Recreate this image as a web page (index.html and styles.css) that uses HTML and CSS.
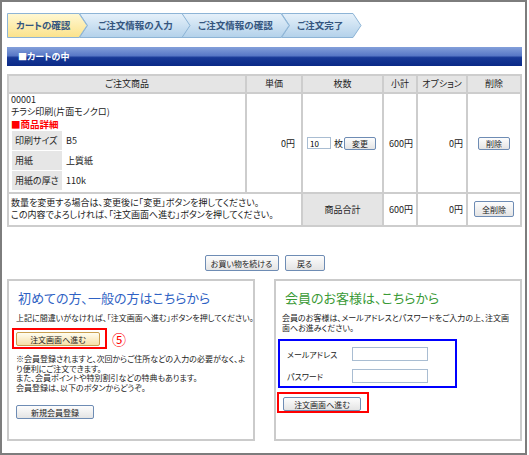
FILE: index.html
```html
<!DOCTYPE html>
<html>
<head>
<meta charset="utf-8">
<title>カートの中</title>
<link rel="stylesheet" href="styles.css">
</head>
<body>
<div class="frame">
	<svg class="steps" width="356" height="25" viewBox="0 0 356 25">
		<defs>
			<linearGradient id="step-on" x1="0" y1="0" x2="0" y2="1">
				<stop offset="0" stop-color="#fff8d4"/>
				<stop offset="1" stop-color="#fbe28a"/>
			</linearGradient>
			<linearGradient id="step-off" x1="0" y1="0" x2="0" y2="1">
				<stop offset="0" stop-color="#e6f1fa"/>
				<stop offset="1" stop-color="#b3d1ea"/>
			</linearGradient>
		</defs>
		<polygon class="step-shape" points="274.5,0.5 346,0.5 354,12.5 346,24.5 274.5,24.5 282.5,12.5" fill="url(#step-off)"/>
		<polygon class="step-shape" points="174.5,0.5 274,0.5 282,12.5 274,24.5 174.5,24.5 182.5,12.5" fill="url(#step-off)"/>
		<polygon class="step-shape" points="72.5,0.5 175,0.5 183,12.5 175,24.5 72.5,24.5 80.5,12.5" fill="url(#step-off)"/>
		<polygon class="step-shape" points="0.5,0.5 72,0.5 80,12.5 72,24.5 0.5,24.5" fill="url(#step-on)"/>
		<text class="step-text" x="9" y="16">カートの確認</text>
		<text class="step-text" x="91" y="16">ご注文情報の入力</text>
		<text class="step-text" x="191" y="16">ご注文情報の確認</text>
		<text class="step-text" x="290" y="16">ご注文完了</text>
	</svg>

	<div class="cart-title">■カートの中</div>

	<table class="cart">
		<colgroup>
			<col style="width:238px">
			<col style="width:56px">
			<col style="width:81px">
			<col style="width:34px">
			<col style="width:50px">
			<col style="width:54px">
		</colgroup>
		<tr>
			<th>ご注文商品</th>
			<th>単価</th>
			<th>枚数</th>
			<th>小計</th>
			<th>オプション</th>
			<th>削除</th>
		</tr>
		<tr class="item">
			<td class="product">
				<p>00001</p>
				<p>チラシ印刷(片面モノクロ)</p>
				<p class="detail">■商品詳細</p>
				<dl class="spec">
					<dt>印刷サイズ</dt><dd>B5</dd>
					<dt>用紙</dt><dd>上質紙</dd>
					<dt>用紙の厚さ</dt><dd>110k</dd>
				</dl>
			</td>
			<td class="price">0円</td>
			<td>
				<div class="qty">
					<input class="qty-input" type="text" value="10">
					<span class="qty-unit">枚</span>
					<button class="btn btn-small">変更</button>
				</div>
			</td>
			<td class="sub">600円</td>
			<td class="opt">0円</td>
			<td class="center"><button class="btn btn-small">削除</button></td>
		</tr>
		<tr class="total">
			<td colspan="2" class="note">数量を変更する場合は、変更後に「変更」ボタンを押してください。<br>この内容でよろしければ、「注文画面へ進む」ボタンを押してください。</td>
			<td class="total-label">商品合計</td>
			<td class="sub">600円</td>
			<td class="opt">0円</td>
			<td class="center"><button class="btn btn-all">全削除</button></td>
		</tr>
	</table>

	<div class="nav-buttons">
		<button class="btn btn-continue">お買い物を続ける</button>
		<button class="btn btn-back">戻る</button>
	</div>

	<div class="entry">
		<div class="box guest">
			<h2 class="box-title">初めての方、一般の方はこちらから</h2>
			<p class="box-text">上記に間違いがなければ、「注文画面へ進む」ボタンを押してください。</p>
			<div class="order-row">
				<div class="mark-red"><button class="btn btn-order">注文画面へ進む</button></div>
				<span class="step-no">⑤</span>
			</div>
			<p class="guest-note">※会員登録されますと、次回からご住所などの入力の必要がなく、よ<br>り便利にご注文できます。<br>また、会員ポイントや特別割引などの特典もあります。<br>会員登録は、以下のボタンからどうぞ。</p>
			<button class="btn btn-register">新規会員登録</button>
		</div>
		<div class="box member">
			<h2 class="box-title">会員のお客様は、こちらから</h2>
			<p class="box-text">会員のお客様は、メールアドレスとパスワードをご入力の上、注文画<br>面へお進みください。</p>
			<div class="login">
				<label>メールアドレス</label><input class="login-input" type="text">
				<label>パスワード</label><input class="login-input" type="password">
			</div>
			<div class="mark-red mark-member"><button class="btn btn-login">注文画面へ進む</button></div>
		</div>
	</div>
</div>
</body>
</html>
```

FILE: styles.css
```css
*{margin: 0; padding: 0; box-sizing: border-box;}
body{font-family: "Noto Sans CJK JP", "Noto Sans", sans-serif; font-size: 9px; color: #222; font-feature-settings: "palt";}
.frame{width: 527px; height: 455px; border: 2px solid #7d7d7d; padding: 11px 3px 0 5px; overflow: hidden;}

.steps{display: block;}
.step-shape{stroke: #8db4d6; stroke-width: 1;}
.step-text{font-family: "Noto Sans CJK JP", sans-serif; font-size: 9.5px; font-weight: bold; fill: #35567f; font-feature-settings: "palt";}

.cart-title{margin-top: 9px; height: 19px; line-height: 19px; padding-left: 11px; color: #fff; font-weight: bold; font-size: 9px; background: linear-gradient(#839fda, #5878c6 45%, #173896 56%, #0a2987);}

.cart{margin-top: 8px; width: 515px; table-layout: fixed; border-collapse: separate; border-spacing: 0; border-top: 2px solid #cdcdcd; border-left: 2px solid #cdcdcd;}
.cart th, .cart td{border-right: 2px solid #cdcdcd; border-bottom: 2px solid #cdcdcd; padding: 0 2px; vertical-align: middle;}
.cart th{background: #e5e5e5; font-weight: normal; line-height: 16px;}
.product{line-height: 12px; padding: 0 2px 2px !important;}
.detail{color: #f00; font-weight: bold; font-size: 9.5px; line-height: 13px;}
.spec{display: grid; grid-template-columns: 50px 1fr; row-gap: 1px; margin-left: 1px;}
.spec dt{background: #e6e6e6; line-height: 19px; padding-left: 3px;}
.spec dd{line-height: 19px; padding-left: 4px;}
.price{text-align: right; padding-right: 6px !important;}
.sub{text-align: right; padding-right: 3px !important;}
.opt{text-align: right; padding-right: 3px !important;}
.center{text-align: center;}
.qty{display: flex; align-items: center; padding-left: 2px;}
.qty-input{width: 24px; height: 12px; border: 1px solid #a9bdd2; font-size: 8px; padding-left: 2px; font-family: inherit;}
.qty-unit{margin: 0 1px 0 3px;}
.total td{padding-top: 3px; padding-bottom: 4px;}
.note{line-height: 12px;}
.total-label{background: #e5e5e5; text-align: center;}

.btn{font-family: inherit; font-size: 8px; color: #222; border: 1px solid #6e8cb4; border-radius: 2px; background: linear-gradient(#fdfdfd, #e4e4e4); font-feature-settings: "palt";}
.btn-small{width: 32px; height: 13px;}
.btn-all{width: 40px; height: 16px;}

.nav-buttons{display: flex; justify-content: center; gap: 6px; margin-top: 28px;}
.btn-continue{width: 74px; height: 16px;}
.btn-back{width: 40px; height: 16px;}

.entry{display: flex; justify-content: space-between; margin-top: 8px;}
.box{width: 248px; height: 162px; border: 2px solid #cbcbcb; padding: 9px 7px 0;}
.member{padding-left: 6px;}
.box-title{font-size: 13px; line-height: 16px; font-weight: normal; padding-left: 2px;}
.guest .box-title{color: #2f62c4;}
.member .box-title{color: #3a9a36; padding-left: 3px;}
.box-text{font-size: 8px; line-height: 10px; margin-top: 7px; white-space: nowrap;}

.mark-red{display: inline-block; border: 2px solid #f00; padding: 2px 5px 1px 2px;}
.order-row{display: flex; align-items: center; margin: 5px 0 0 -4px;}
.step-no{color: #f00; font-size: 14px; line-height: 16px; margin-left: 5px;}
.btn-order{display: block; width: 84px; height: 14px; border-color: #c9a050; background: linear-gradient(#fffdf0, #f6e0a8);}
.guest-note{font-size: 8px; line-height: 9.5px; margin-top: 5px; white-space: nowrap;}
.btn-register{display: block; width: 78px; height: 14px; margin-top: 13px;}

.login{display: grid; grid-template-columns: 65px 76px; row-gap: 8px; align-items: center; width: 179px; border: 2px solid #00f; padding: 6px 7px 3px; margin: 6px 0 0 -4px; font-size: 8px;}
.login-input{width: 76px; height: 14px; border: 1px solid #a9bdd2;}
.mark-member{display: block; width: 92px; margin: 4px 0 0 -5px; padding: 3px 6px 0 4px;}
.btn-login{display: block; width: 78px; height: 14px;}
```
